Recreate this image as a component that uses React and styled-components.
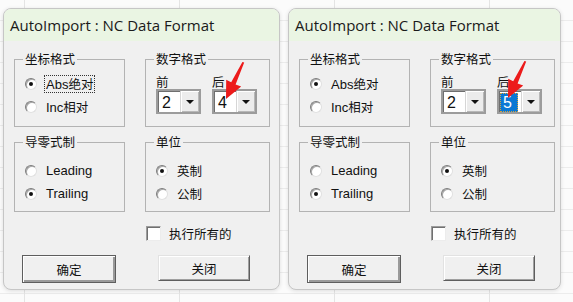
import React from "react";
import styled, { createGlobalStyle } from "styled-components";

const Global = createGlobalStyle`
  html, body { margin: 0; padding: 0; }
  body {
    width: 573px;
    height: 302px;
    overflow: hidden;
    background-color: #fbfbfb;
    background-image:
      linear-gradient(to right, transparent 24px, #e4e4e4 24px, #e4e4e4 25px, transparent 25px),
      linear-gradient(to bottom, transparent 20px, #ececec 20px, #ececec 21px, transparent 21px);
    background-size: 155px 100%, 100% 21px;
    font-family: "Liberation Sans", "Noto Sans CJK SC", sans-serif;
  }
`;

const Page = styled.div`
  display: flex;
  align-items: flex-start;
  gap: 8px;
  padding: 8px 0 0 3px;
`;

const Dialog = styled.div`
  position: relative;
  flex: none;
  box-sizing: border-box;
  width: ${(p) => p.$w}px;
  height: 282px;
  display: flex;
  flex-direction: column;
  background: #f0f0f0;
  border: 1px solid #c6c6c6;
  border-radius: 8px;
  overflow: hidden;
  box-shadow: 0 1px 4px rgba(0, 0, 0, 0.12);
`;

const TitleBar = styled.div`
  flex: none;
  height: 32px;
  display: flex;
  align-items: center;
  padding-left: 6px;
  background: #eaf5e3;
  font-family: "Open Sans", "Liberation Sans", sans-serif;
  font-size: 15px;
  color: #1a1a1a;
  white-space: nowrap;
`;

const Body = styled.div`
  display: grid;
  grid-template-columns: 111px 125px;
  grid-auto-rows: auto;
  column-gap: 20px;
  row-gap: 8px;
  padding: 11px 0 0 10px;
  align-items: start;
`;

const Group = styled.fieldset`
  box-sizing: border-box;
  margin: 0;
  min-width: 0;
  height: ${(p) => p.$h}px;
  padding: 0 0 0 10px;
  border: 1px solid #b3b3b3;
  border-radius: 0;
`;

const Legend = styled.legend`
  margin-left: -2px;
  padding: 0 2px;
  font-family: "Noto Sans CJK SC", sans-serif;
  font-size: 12.5px;
  line-height: 14px;
  color: #111;
`;

const RadioList = styled.div`
  display: flex;
  flex-direction: column;
  padding-top: ${(p) => p.$top}px;
`;

const RadioRow = styled.div`
  display: flex;
  align-items: center;
  gap: 8px;
  height: 23px;
  font-size: 13px;
  color: #111;
`;

const RadioCircle = styled.span`
  position: relative;
  flex: none;
  box-sizing: border-box;
  width: 12px;
  height: 12px;
  border-radius: 50%;
  background: #fff;
  border: 1px solid;
  border-color: #7c7c7c #e0e0e0 #e0e0e0 #7c7c7c;
  box-shadow: inset 1px 1px 0 #a8a8a8;

  &::after {
    content: "";
    display: ${(p) => (p.$on ? "block" : "none")};
    position: absolute;
    left: 3px;
    top: 3px;
    width: 4px;
    height: 4px;
    border-radius: 50%;
    background: #111;
  }
`;

const RadioText = styled.span`
  line-height: 15px;
  padding: 0 1px;
  margin-left: -1px;
  border: 1px ${(p) => (p.$focus ? "dotted #333" : "solid transparent")};
`;

const Cjk = styled.span`
  font-family: "Noto Sans CJK SC", sans-serif;
  font-size: 12.5px;
`;

const DigitCols = styled.div`
  display: flex;
  gap: 11px;
  padding-top: 8px;
`;

const DigitCol = styled.div`
  display: flex;
  flex-direction: column;
`;

const DigitLabel = styled.div`
  height: 15px;
  line-height: 15px;
  font-family: "Noto Sans CJK SC", sans-serif;
  font-size: 12.5px;
  color: #111;
`;

const Combo = styled.div`
  box-sizing: border-box;
  width: 45px;
  height: 25px;
  display: flex;
  border: 2px solid #9c9c9c;
  box-shadow: inset 1px 1px 0 #6f6f6f;
  background: #fff;
`;

const ComboValue = styled.div`
  flex: 1;
  display: flex;
  align-items: center;
  padding: 1px 0 0 1px;
`;

const ValueText = styled.span`
  box-sizing: border-box;
  height: 19px;
  line-height: 17px;
  padding: 0 ${(p) => (p.$sel ? 5 : 2)}px 0 2px;
  font-size: 16px;
  color: ${(p) => (p.$sel ? "#fff" : "#111")};
  background: ${(p) => (p.$sel ? "#0a78d4" : "transparent")};
  border: 1px ${(p) => (p.$sel ? "dotted #d9a13a" : "solid transparent")};
`;

const ComboButton = styled.div`
  flex: none;
  width: 18px;
  display: flex;
  align-items: center;
  justify-content: center;
  background: #ececec;
  border-left: 1px solid #d6d6d6;
  box-shadow: inset 1px 1px 0 #fff, inset -1px -1px 0 #b8b8b8;

  &::after {
    content: "";
    border-left: 4px solid transparent;
    border-right: 4px solid transparent;
    border-top: 4px solid #111;
  }
`;

const CheckRow = styled.div`
  grid-column: 2;
  margin-top: 6px;
  display: flex;
  align-items: center;
  gap: 8px;
  height: 15px;
  padding-left: 1px;
`;

const CheckBox = styled.span`
  box-sizing: border-box;
  width: 15px;
  height: 15px;
  background: #fff;
  border: 1px solid;
  border-color: #9c9c9c #ececec #ececec #9c9c9c;
  box-shadow: inset 1px 1px 0 #707070;
`;

const CheckText = styled.span`
  font-family: "Noto Sans CJK SC", sans-serif;
  font-size: 12.5px;
  color: #111;
`;

const Button = styled.div`
  box-sizing: border-box;
  margin-top: 6px;
  margin-left: ${(p) => (p.$default ? 8 : 13)}px;
  width: ${(p) => (p.$default ? 94 : 92)}px;
  height: ${(p) => (p.$default ? 28 : 26)}px;
  display: flex;
  align-items: center;
  justify-content: center;
  background: #f0f0f0;
  font-family: "Noto Sans CJK SC", sans-serif;
  font-size: 12.5px;
  color: #111;
  border: 1px solid ${(p) => (p.$default ? "#5e5e5e" : "#e2e2e2")};
  border-right-color: #5e5e5e;
  border-bottom-color: #5e5e5e;
  box-shadow: ${(p) =>
    p.$default
      ? "inset 1px 1px 0 #fff, inset -2px -2px 0 #9a9a9a"
      : "inset 1px 1px 0 #fff, inset -1px -1px 0 #a0a0a0"};
`;

const Arrow = styled.svg`
  position: absolute;
  left: ${(p) => p.$x}px;
  top: ${(p) => p.$y}px;
  width: 32px;
  height: 44px;
  overflow: visible;
  pointer-events: none;
`;

function RedArrow({ x, y }) {
  return (
    <Arrow $x={x} $y={y} viewBox="0 0 32 44">
      <polygon
        points="10,40 25.2,27.6 19.6,25.4 28.2,3.6 26.4,3.0 15.2,23.2 10.2,20.8"
        fill="#ec1b1b"
      />
    </Arrow>
  );
}

function Radio({ on, focus, children }) {
  return (
    <RadioRow>
      <RadioCircle $on={on} />
      <RadioText $focus={focus}>{children}</RadioText>
    </RadioRow>
  );
}

function AutoImportDialog({ width, after, selected, focusAbs, arrow }) {
  return (
    <Dialog $w={width}>
      <TitleBar>AutoImport : NC Data Format</TitleBar>
      <Body>
        <Group $h={75}>
          <Legend>坐标格式</Legend>
          <RadioList $top={6}>
            <Radio on focus={focusAbs}>
              Abs<Cjk>绝对</Cjk>
            </Radio>
            <Radio>
              Inc<Cjk>相对</Cjk>
            </Radio>
          </RadioList>
        </Group>
        <Group $h={75}>
          <Legend>数字格式</Legend>
          <DigitCols>
            <DigitCol>
              <DigitLabel>前</DigitLabel>
              <Combo>
                <ComboValue>
                  <ValueText>2</ValueText>
                </ComboValue>
                <ComboButton />
              </Combo>
            </DigitCol>
            <DigitCol>
              <DigitLabel>后</DigitLabel>
              <Combo>
                <ComboValue>
                  <ValueText $sel={selected}>{after}</ValueText>
                </ComboValue>
                <ComboButton />
              </Combo>
            </DigitCol>
          </DigitCols>
        </Group>
        <Group $h={77}>
          <Legend>导零式制</Legend>
          <RadioList $top={10}>
            <Radio>Leading</Radio>
            <Radio on>Trailing</Radio>
          </RadioList>
        </Group>
        <Group $h={77}>
          <Legend>单位</Legend>
          <RadioList $top={10}>
            <Radio on>
              <Cjk>英制</Cjk>
            </Radio>
            <Radio>
              <Cjk>公制</Cjk>
            </Radio>
          </RadioList>
        </Group>
        <CheckRow>
          <CheckBox />
          <CheckText>执行所有的</CheckText>
        </CheckRow>
        <Button $default>确定</Button>
        <Button>关闭</Button>
      </Body>
      <RedArrow x={arrow.x} y={arrow.y} />
    </Dialog>
  );
}

export default function App() {
  return (
    <>
      <Global />
      <Page>
        <AutoImportDialog width={277} after="4" focusAbs arrow={{ x: 212, y: 50 }} />
        <AutoImportDialog width={273} after="5" selected arrow={{ x: 209, y: 49 }} />
      </Page>
    </>
  );
}
